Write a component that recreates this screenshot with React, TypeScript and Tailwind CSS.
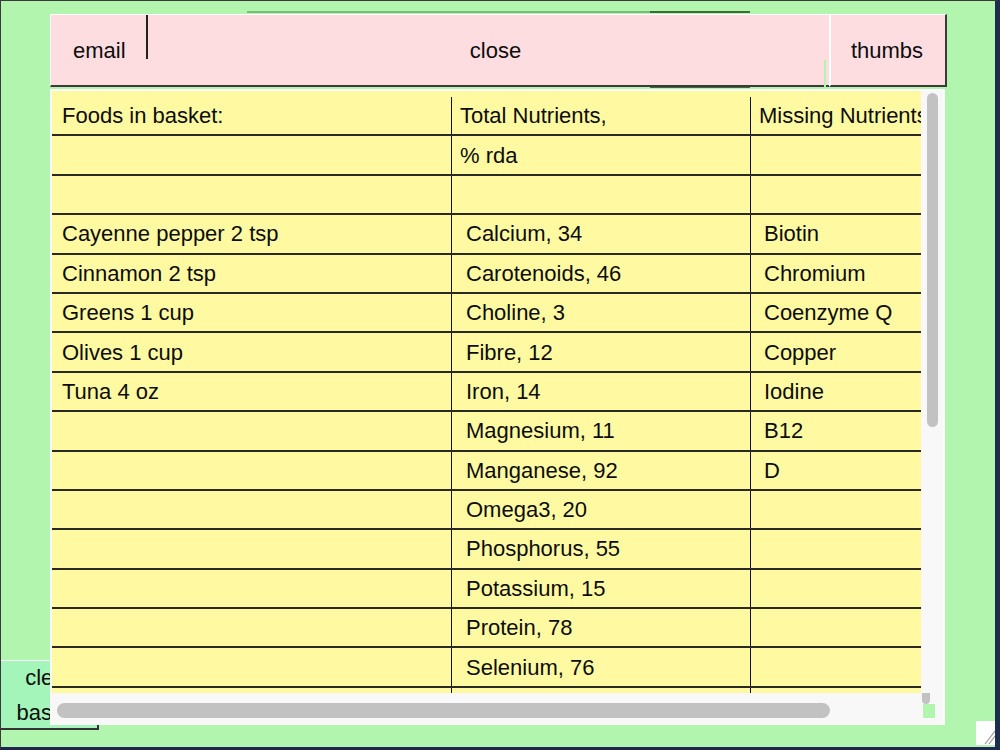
import React from 'react';

const rows: [string, string, string][] = [
  ['Cayenne pepper 2 tsp', 'Calcium, 34', 'Biotin'],
  ['Cinnamon 2 tsp', 'Carotenoids, 46', 'Chromium'],
  ['Greens 1 cup', 'Choline, 3', 'Coenzyme Q'],
  ['Olives 1 cup', 'Fibre, 12', 'Copper'],
  ['Tuna 4 oz', 'Iron, 14', 'Iodine'],
  ['', 'Magnesium, 11', 'B12'],
  ['', 'Manganese, 92', 'D'],
  ['', 'Omega3, 20', ''],
  ['', 'Phosphorus, 55', ''],
  ['', 'Potassium, 15', ''],
  ['', 'Protein, 78', ''],
  ['', 'Selenium, 76', ''],
  ['', 'Sodium, 6', ''],
];

function Row({ a, b, c, head }: { a: string; b: string; c: string; head?: boolean }) {
  return (
    <div className="grid grid-cols-[399px_299px_1fr] h-[39.4px] border-b-2 border-[#2a2a24]">
      <div className="flex items-center pl-[10px] whitespace-nowrap">{a}</div>
      <div className={`flex items-center border-l border-[#111] whitespace-nowrap ${head ? 'pl-[8px]' : 'pl-[14px]'}`}>{b}</div>
      <div className={`flex items-center border-l border-[#111] whitespace-nowrap overflow-hidden ${head ? 'pl-[8px]' : 'pl-[13px]'}`}>{c}</div>
    </div>
  );
}

export default function App() {
  return (
    <div
      className="relative w-[1000px] h-[750px] overflow-hidden bg-[#b1f5ae] border-t border-l border-[#3a3a3a] border-r-[5px] border-r-[#1e2c50] border-b-[3px] border-b-[#1e2750] text-[22px] text-[#0d0d0d]"
      style={{ fontFamily: '"Liberation Sans", Arial, sans-serif' }}
    >
      {/* page behind the dialog */}
      <div className="flex flex-col h-full">
        <div className="flex mt-[10px] ml-[246px] h-[77px]">
          <div className="w-[403px] border-t-2 border-[#7fb87c]" />
          <div className="w-[100px] border-t-2 border-b-2 border-[#3d6b3d]" />
        </div>
        <div className="flex-1" />
        <div className="mb-[17px] w-[98px] h-[70px] bg-[#a4f5ba] border-t border-white border-r-2 border-b-2 border-r-[#333] border-b-[#333] flex flex-col items-center justify-center leading-[35px]">
          <span>clear</span>
          <span>basket</span>
        </div>
      </div>

      {/* resize grip */}
      <div className="absolute left-[975px] top-[720px] w-[20px] h-[24px] bg-white">
        <svg width="20" height="24" viewBox="0 0 20 24">
          <line x1="19" y1="10" x2="9" y2="23" stroke="#9a9a9a" strokeWidth="1.2" />
          <line x1="19" y1="15" x2="13" y2="23" stroke="#9a9a9a" strokeWidth="1.2" />
        </svg>
      </div>

      {/* dialog */}
      <div className="absolute left-[49px] top-[13px] w-[897px]">
        <div className="relative flex h-[73px] bg-[#fedde1]">
          <div className="w-[98px] border-t border-l border-white border-b-2 border-b-[#3a3a3a] flex items-center pl-[22px]">
            email
          </div>
          <div className="absolute left-[96px] top-[1px] w-[2px] h-[44px] bg-[#222]" />
          <div className="flex-1 border-t border-white border-b-2 border-b-[#3a3a3a] flex items-center justify-center pl-[14px]">
            close
          </div>
          <div className="absolute left-[774px] top-[46px] w-[2px] h-[27px] bg-[#b1f5ae]" />
          <div className="w-[118px] border-t border-l-2 border-white border-r-2 border-r-[#3a3a3a] border-b-2 border-b-[#3a3a3a] flex items-center justify-center pr-[2px]">
            thumbs
          </div>
        </div>

        <div className="mt-[2px] w-[895px] h-[636px] bg-[#f8f8f8] border-2 border-[#fbfbfb] flex flex-col">
          <div className="flex h-[602px]">
            <div className="w-[869px] h-full bg-[#fffaa2] overflow-hidden pt-[6px]">
              <Row a="Foods in basket:" b="Total Nutrients," c="Missing Nutrients" head />
              <Row a="" b="% rda" c="" head />
              <Row a="" b="" c="" head />
              {rows.map((r, i) => (
                <Row key={i} a={r[0]} b={r[1]} c={r[2]} />
              ))}
            </div>
            <div className="flex-1 pl-[6px] pt-[2px]">
              <div className="w-[11px] h-[334px] rounded-full bg-[#c2c2c2]" />
            </div>
          </div>
          <div className="flex flex-1">
            <div className="flex-1 pl-[5px] pt-[10px]">
              <div className="w-[773px] h-[15px] rounded-full bg-[#c2c2c2]" />
            </div>
            <div className="w-[22px] flex flex-col">
              <div className="w-[8px] h-[11px] ml-[1px] rounded-b-[4px] bg-[#c2c2c2]" />
              <div className="w-[13px] h-[15px] ml-[2px] bg-[#b1f5ae] border-r border-b border-white" />
            </div>
          </div>
        </div>
      </div>
    </div>
  );
}
